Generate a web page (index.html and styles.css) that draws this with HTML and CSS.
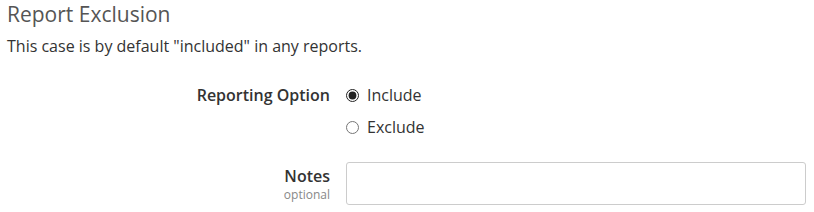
FILE: index.html
```html
<!DOCTYPE html>
<html lang="en">
<head>
    <meta charset="UTF-8">
    <title>Report Exclusion</title>
    <link rel="stylesheet" href="styles.css">
</head>
<body>
    <div class="section">
        <h3>Report Exclusion</h3>
        <p class="intro">This case is by default "included" in any reports.</p>

        <div class="form-row">
            <div class="label">Reporting Option</div>
            <div class="options">
                <label class="radio"><input type="radio" name="reporting" value="include" checked> Include</label>
                <label class="radio"><input type="radio" name="reporting" value="exclude"> Exclude</label>
            </div>
        </div>

        <div class="form-row notes-row">
            <div class="label">
                Notes
                <span class="hint">optional</span>
            </div>
            <div>
                <textarea name="notes"></textarea>
            </div>
        </div>
    </div>
</body>
</html>
```

FILE: styles.css
```css
body {
    margin: 0;
    background-color: #fff;
    font-family: "Open Sans", Arial, sans-serif;
    font-size: 16px;
    color: #333;
}
.section {
    padding: 0 8px 0 7px;
}
.section h3 {
    margin: 0;
    font-size: 21px;
    font-weight: 400;
    line-height: 28px;
    color: #555;
}
.intro {
    margin: 7px 0 0 0;
    line-height: 22px;
}
.form-row {
    display: grid;
    grid-template-columns: 323px 1fr;
    column-gap: 16px;
    margin-top: 27px;
}
.form-row .label {
    text-align: right;
    font-weight: 600;
    line-height: 22px;
}
.options {
    display: flex;
    flex-direction: column;
    gap: 10px;
}
.radio {
    display: flex;
    align-items: center;
    line-height: 22px;
}
.radio input {
    margin: 0 8px 0 0;
    width: 13px;
    height: 13px;
    accent-color: #222;
}
.notes-row {
    margin-top: 24px;
}
.notes-row .label {
    padding-top: 3px;
}
.hint {
    display: block;
    font-size: 12px;
    font-weight: 400;
    color: #888;
    line-height: 16px;
}
textarea {
    display: block;
    box-sizing: border-box;
    width: 100%;
    height: 43px;
    border: 1px solid #ccc;
    border-radius: 3px;
    resize: none;
    font-family: inherit;
}
```
